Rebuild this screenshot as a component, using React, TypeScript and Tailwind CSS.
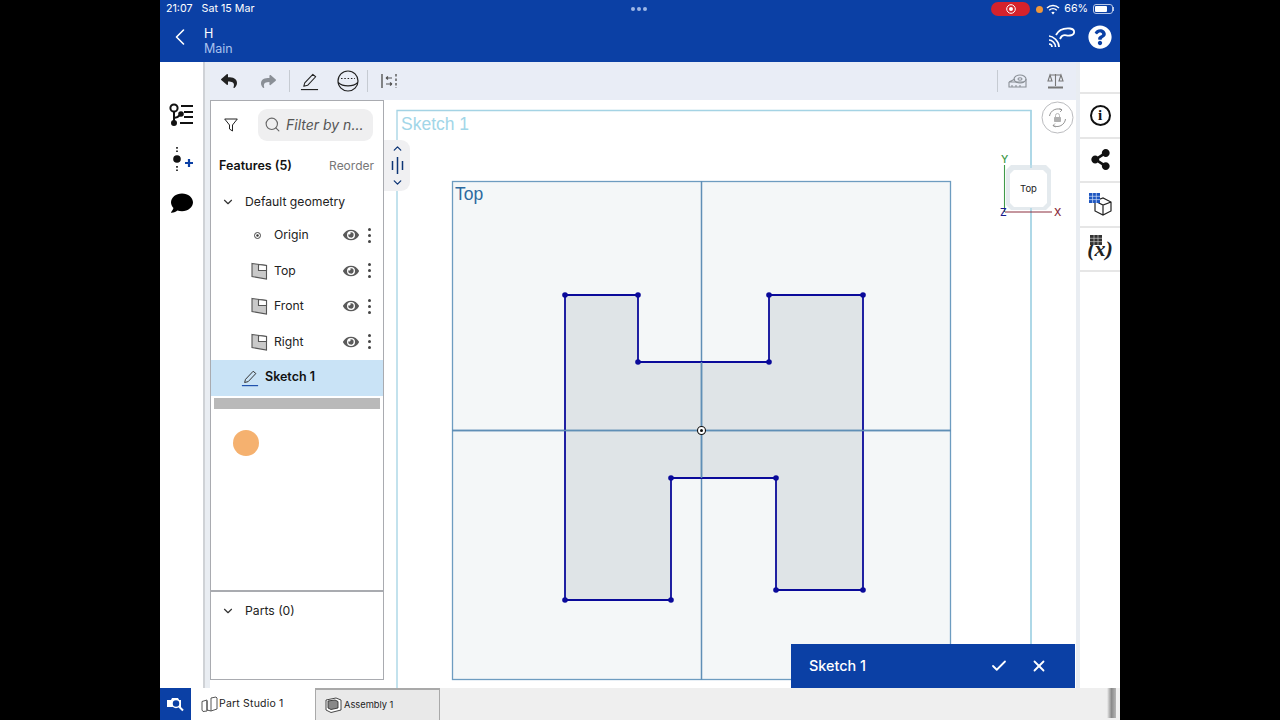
import { Check, ChevronDown, ChevronLeft, ChevronUp, Search, X } from 'lucide-react'
import { FaComment, FaEye, FaQuestionCircle, FaReply, FaShare, FaShareAlt } from 'react-icons/fa'

const PLANES = ['Top', 'Front', 'Right']

function PlaneIcon() {
  return (
    <svg width="18" height="18" viewBox="0 0 18 18" fill="none">
      <path d="M2 1.5 L16.5 3.5 V17 L2 14.5 Z" fill="#c9c9c9" stroke="#555" strokeWidth="1.1" />
      <path d="M8.5 2.5 V8.5 H16.5 V3.5 Z" fill="#fff" stroke="#555" strokeWidth="1.1" />
    </svg>
  )
}

function Pencil({ color = '#222', line = '#222', size = 20 }: { color?: string; line?: string; size?: number }) {
  return (
    <svg width={size} height={size} viewBox="0 0 20 20" fill="none">
      <path d="M4 15 L5 11.5 L13.5 2.5 L16.5 5 L8 14 Z" stroke={color} strokeWidth="1.1" strokeLinejoin="round" />
      <path d="M1 18.5 H19" stroke={line} strokeWidth="1.2" />
    </svg>
  )
}

function EyeMenu() {
  return (
    <div className="ml-auto flex items-center">
      <FaEye className="h-4 w-4 text-[#5a5a5a]" />
      <div className="ml-[9px] mr-[12px] flex flex-col gap-[3px]">
        <span className="h-[3px] w-[3px] rounded-full bg-[#444]" />
        <span className="h-[3px] w-[3px] rounded-full bg-[#444]" />
        <span className="h-[3px] w-[3px] rounded-full bg-[#444]" />
      </div>
    </div>
  )
}

function StatusBar() {
  return (
    <div className="relative flex h-[18px] items-center px-[6px] pt-[1px] text-[10.7px] text-white">
      <span>21:07</span>
      <span className="ml-[9px]">Sat 15 Mar</span>
      <div className="absolute left-[471px] top-[7px] flex gap-[2px]">
        <span className="h-1 w-1 rounded-full bg-[#9db6e6]" />
        <span className="h-1 w-1 rounded-full bg-[#9db6e6]" />
        <span className="h-1 w-1 rounded-full bg-[#9db6e6]" />
      </div>
      <div className="ml-auto flex items-center">
        <div className="flex h-[14px] w-[39px] items-center justify-center rounded-full bg-[#d5222c]">
          <svg width="10" height="10" viewBox="0 0 10 10">
            <circle cx="5" cy="5" r="4.3" fill="none" stroke="#fff" strokeWidth="1" />
            <circle cx="5" cy="5" r="2" fill="#fff" />
          </svg>
        </div>
        <span className="ml-[6px] h-[7px] w-[7px] rounded-full bg-[#f0973a]" />
        <svg className="ml-[3px]" width="14" height="11" viewBox="0 0 14 11" fill="none" stroke="#fff" strokeWidth="1.5">
          <path d="M1 4 C4.5 0.8 9.5 0.8 13 4" />
          <path d="M3.2 6.2 C5.3 4.4 8.7 4.4 10.8 6.2" />
          <path d="M7 10.5 L5.3 8.4 C6.3 7.6 7.7 7.6 8.7 8.4 Z" fill="#fff" stroke="none" />
        </svg>
        <span className="ml-[4px]">66%</span>
        <div className="ml-[5px] h-[10px] w-[20px] rounded-[3px] border border-[#b8c8e8] p-[1px]">
          <div className="h-full w-[12px] rounded-[1px] bg-white" />
        </div>
        <span className="h-[4px] w-[1px] bg-[#b8c8e8]" />
      </div>
    </div>
  )
}

function Header() {
  return (
    <div className="h-[62px] shrink-0 bg-[#0b40a5]">
      <StatusBar />
      <div className="flex h-[44px] items-center">
        <ChevronLeft className="mb-[6px] ml-[6px] h-[30px] w-[28px] text-white" strokeWidth={1.4} />
        <div className="ml-[10px] mt-[3px] leading-none">
          <div className="text-[12.5px] text-white">H</div>
          <div className="mt-[3px] text-[12.5px] text-[#a9c2ee]">Main</div>
        </div>
        <svg className="mb-[6px] ml-auto" width="28" height="22" viewBox="0 0 28 22" fill="none">
          <path d="M8 9 C11 3 16 2 22 2.5 C28 3.5 27 9 22 9.5 C18 10 17 8 14 10 C13 11 12.5 12 12 13" stroke="#fff" strokeWidth="1.8" />
          <path d="M1 10 C5 10 11 15 11 21 M1 14 C4 14 7.5 17 7.5 21 M1 18 C2.8 18 4 19.5 4 21" stroke="#fff" strokeWidth="1.7" />
        </svg>
        <FaQuestionCircle className="mb-[6px] ml-[12px] mr-[8px] h-[24px] w-[24px] text-white" />
      </div>
    </div>
  )
}

function LeftRail() {
  return (
    <div className="flex w-[43px] shrink-0 flex-col items-center bg-white pt-[41px]">
      <svg width="26" height="24" viewBox="0 0 26 24" fill="none" stroke="#111" strokeWidth="2">
        <circle cx="5" cy="5" r="3.6" />
        <path d="M5 9 V20 M5 15 C9 15 10 13 12 11" />
        <circle cx="5" cy="20" r="2" fill="#111" />
        <circle cx="12" cy="11" r="1.8" fill="#111" />
        <path d="M12 3 H24 M15 9 H24 M15 14 H24 M11 20 H24" />
      </svg>
      <svg className="mt-[20px]" width="22" height="24" viewBox="0 0 22 24">
        <path d="M6 0 V5 M6 19 V24" stroke="#111" strokeWidth="1.6" strokeDasharray="1.8 1.6" />
        <circle cx="6" cy="12" r="3.8" fill="#111" />
        <path d="M14 16 H22 M18 12 V20" stroke="#0b40a5" strokeWidth="2.2" />
      </svg>
      <FaComment className="mt-[21px] h-[22px] w-[24px] text-black" />
    </div>
  )
}

function Toolbar() {
  return (
    <div className="flex h-[38px] shrink-0 items-center bg-[#e9edf6]">
      <FaReply className="ml-[11px] h-[16px] w-[16px] text-[#222]" />
      <FaShare className="ml-[24px] h-[15px] w-[15px] text-[#8a8f96]" />
      <span className="ml-[13px] h-[22px] w-[1px] bg-[#c6cbd2]" />
      <div className="ml-[10px]">
        <Pencil size={19} />
      </div>
      <svg className="ml-[18px]" width="22" height="22" viewBox="0 0 22 22" fill="none" stroke="#222" strokeWidth="1.2">
        <circle cx="11" cy="11" r="10" />
        <path d="M1.2 12.5 C6 17 16 17 20.8 12.5" />
        <path d="M4 8.5 H18" strokeDasharray="1.5 1.8" />
      </svg>
      <span className="ml-[8px] h-[22px] w-[1px] bg-[#c6cbd2]" />
      <svg className="ml-[13px]" width="16" height="16" viewBox="0 0 16 16" fill="none" stroke="#555" strokeWidth="1.1">
        <path d="M1 1 V15" strokeWidth="1.4" />
        <path d="M15 1 V15" strokeDasharray="2.5 2" strokeWidth="1.4" />
        <path d="M5 5 H11 M5 5 L7 3.5 M5 5 L7 6.5 M11 11 H5 M11 11 L9 9.5 M11 11 L9 12.5" />
      </svg>
      <div className="ml-auto flex items-center">
        <span className="h-[22px] w-[1px] bg-[#c6cbd2]" />
        <svg className="ml-[10px]" width="19" height="15" viewBox="0 0 19 15" fill="none" stroke="#8a8f96" strokeWidth="1.1">
          <ellipse cx="12" cy="5" rx="6" ry="4" />
          <ellipse cx="12" cy="5" rx="2" ry="1.2" />
          <path d="M1 8 L7 5 M1 8 V13 H18 V5 M1 8 H16 M4 13 V11 M8 13 V11 M12 13 V11" />
        </svg>
        <svg className="ml-[20px] mr-[12px]" width="17" height="16" viewBox="0 0 17 16" fill="none" stroke="#777" strokeWidth="1.1">
          <path d="M8.5 1 V13 M3 2 H14 M3 2 L1 8 H5 Z M14 2 L12 8 H16 Z" />
          <path d="M1 14.5 H16" strokeWidth="2" />
        </svg>
      </div>
    </div>
  )
}

function FeaturePanel() {
  return (
    <div className="flex h-[580px] w-[174px] flex-col border border-[#a9abb0] bg-white">
      <div className="flex h-[47px] shrink-0 items-center">
        <svg className="ml-[13px]" width="14" height="14" viewBox="0 0 14 14" fill="none" stroke="#222" strokeWidth="1">
          <path d="M0.7 1 H13.3 L8.5 7 V13 L5.5 11 V7 Z" strokeLinejoin="round" />
        </svg>
        <div className="ml-[20px] flex h-[32px] w-[115px] items-center rounded-[9px] bg-[#efeff0] pl-[6px]">
          <Search className="h-[17px] w-[17px] text-[#666]" strokeWidth={1.6} />
          <span className="ml-[5px] text-[14px] italic text-[#555]">Filter by n...</span>
        </div>
      </div>
      <div className="flex h-[36px] shrink-0 items-center justify-between pl-[8px] pr-[9px]">
        <span className="text-[12.5px] font-semibold text-[#111]">Features (5)</span>
        <span className="text-[12px] text-[#777]">Reorder</span>
      </div>
      <div className="flex h-[36px] shrink-0 items-center pl-[10px]">
        <ChevronDown className="h-[14px] w-[14px] text-[#333]" strokeWidth={2} />
        <span className="ml-[10px] text-[12.2px] text-[#222]">Default geometry</span>
      </div>
      <div className="flex h-[33px] shrink-0 items-center pb-[3px] pl-[43px]">
        <svg width="7" height="7" viewBox="0 0 7 7" fill="none">
          <circle cx="3.5" cy="3.5" r="3" stroke="#333" strokeWidth="0.9" />
          <circle cx="3.5" cy="3.5" r="1.2" fill="#333" />
        </svg>
        <span className="ml-[13px] text-[12.2px] text-[#222]">Origin</span>
        <EyeMenu />
      </div>
      {PLANES.map((name) => (
        <div key={name} className="flex h-[35.5px] shrink-0 items-center pl-[39px]">
          <PlaneIcon />
          <span className="ml-[6px] text-[12.2px] text-[#222]">{name}</span>
          <EyeMenu />
        </div>
      ))}
      <div className="flex h-[36px] shrink-0 items-center bg-[#c9e3f6] pl-[30px]">
        <Pencil color="#333" line="#0b40a5" size={18} />
        <span className="ml-[6px] text-[12.5px] font-semibold text-[#111]">Sketch 1</span>
      </div>
      <div className="mx-[3px] mt-[2px] h-[11px] shrink-0 bg-[#b9b9b9]" />
      <div className="min-h-0 flex-1" />
      <div className="h-[89px] shrink-0 border-t-2 border-[#a9abb0]">
        <div className="mt-[10px] flex items-center pl-[10px]">
          <ChevronDown className="h-[14px] w-[14px] text-[#333]" strokeWidth={2} />
          <span className="ml-[10px] text-[12.2px] text-[#222]">Parts (0)</span>
        </div>
      </div>
    </div>
  )
}

function SketchDrawing() {
  return (
    <svg className="absolute inset-0 h-full w-full" viewBox="384 100 692 588" fill="none">
      <path d="M397 688 V110.500 H1031 V688" stroke="#a4d3e4" strokeWidth="1.300" />
      <rect x="452.500" y="181.500" width="498" height="498" fill="#f4f7f8" stroke="#6d9cc0" strokeWidth="1.300" />
      <path d="M452 430.500 H951 M701.500 181 V680" stroke="#5f8fb6" strokeWidth="1.500" />
      <path
        d="M565 295 H638 V362 H769 V295 H863 V590 H776 V478 H671 V600 H565 Z"
        fill="#8a9aa3"
        fillOpacity="0.2"
        stroke="#0a0a9a"
        strokeWidth="1.800"
      />
      <path d="M452 430.500 H951 M701.500 362 V478" stroke="#5f8fb6" strokeWidth="1.500" />
      {[
        [565, 295],
        [638, 295],
        [638, 362],
        [769, 362],
        [769, 295],
        [863, 295],
        [863, 590],
        [776, 590],
        [776, 478],
        [671, 478],
        [671, 600],
        [565, 600],
      ].map(([x, y]) => (
        <circle key={`${x}-${y}`} cx={x} cy={y} r="2.800" fill="#0a0a9a" />
      ))}
      <circle cx="701.500" cy="430.500" r="4" fill="#fff" stroke="#111" strokeWidth="1.100" />
      <circle cx="701.500" cy="430.500" r="1.500" fill="#111" />
      <path d="M1011 165 H1046 L1051 170 V205 L1046 210 H1011 L1006 205 V170 Z" fill="#e4eaee" />
      <path d="M1014 170 H1043 L1047 174 V203 L1043 207 H1014 L1010 203 V174 Z" fill="#fff" />
      <path d="M1031 110 V168 M1031 208 V688" stroke="#a4d3e4" strokeWidth="1.300" />
      <path d="M1004.500 165 V212" stroke="#3f9a4a" strokeWidth="1.100" />
      <path d="M1005 212 H1052" stroke="#8c2f3f" strokeWidth="1.100" />
      <circle cx="1057.500" cy="117.500" r="15.500" fill="#fff" stroke="#a8aaad" strokeWidth="0.800" />
      <path d="M1049.500 116 A8.500 8.500 0 0 1 1062 110 M1065.500 119 A8.500 8.500 0 0 1 1053 125.500" stroke="#888" strokeWidth="0.900" />
      <path d="M1062 110 L1059.500 108.500 M1062 110 L1060 112 M1053 125.500 L1055.500 127 M1053 125.500 L1055 123.500" stroke="#888" strokeWidth="0.800" />
      <rect x="1054" y="117" width="7" height="5" rx="0.800" fill="#b0b0b0" />
      <path d="M1055.500 117 V115.500 A2 2 0 0 1 1059.500 115.500 V117" stroke="#b0b0b0" strokeWidth="0.900" />
    </svg>
  )
}

function Canvas() {
  return (
    <div className="relative min-w-0 flex-1 bg-white">
      <SketchDrawing />
      <span className="absolute left-[17px] top-[14px] font-['Liberation_Sans',sans-serif] text-[17.5px] leading-[21px] text-[#a2d6e8]">
        Sketch 1
      </span>
      <span className="absolute left-[71px] top-[84px] font-['Liberation_Sans',sans-serif] text-[17.5px] leading-[21px] text-[#2d6a9f]">
        Top
      </span>
      <span className="absolute left-[636px] top-[83px] text-[9.5px] leading-[12px] text-[#222]">Top</span>
      <span className="absolute left-[617px] top-[54px] text-[10.5px] font-medium leading-[12px] text-[#3f9a4a]">Y</span>
      <span className="absolute left-[616px] top-[107px] text-[10.5px] font-medium leading-[12px] text-[#1b1b8c]">Z</span>
      <span className="absolute left-[670px] top-[107px] text-[10.5px] font-medium leading-[12px] text-[#8c2f3f]">X</span>

      <div className="absolute left-0 top-[40px] flex h-[51px] w-[26px] flex-col items-center justify-between rounded-r-[9px] bg-[#f0f0f2] py-[2px]">
        <ChevronUp className="h-[13px] w-[13px] text-[#0d3576]" strokeWidth={2.400} />
        <svg width="13" height="17" viewBox="0 0 13 17" stroke="#0d3576" strokeWidth="1.500">
          <path d="M1.500 4 V13 M6.500 0 V17 M11.500 4 V13" />
        </svg>
        <ChevronDown className="h-[13px] w-[13px] text-[#0d3576]" strokeWidth={2.400} />
      </div>

      <div className="absolute bottom-0 left-[407px] flex h-[44px] w-[284px] items-center bg-[#0b40a5] pl-[18px] text-white">
        <span className="text-[14.4px] font-medium">Sketch 1</span>
        <Check className="ml-auto h-[18px] w-[18px]" strokeWidth={2.400} />
        <X className="ml-[22px] mr-[27px] h-[18px] w-[18px]" strokeWidth={2.400} />
      </div>
    </div>
  )
}

function RailButton({ children }: { children: React.ReactNode }) {
  return <div className="flex h-[44.500px] items-center justify-center border-b-2 border-[#e6e6e6]">{children}</div>
}

function RightRail() {
  return (
    <div className="flex w-[40px] shrink-0 flex-col bg-white pt-[30px]">
      <div className="border-t-2 border-[#e6e6e6]">
        <RailButton>
          <div className="flex h-[21px] w-[21px] items-center justify-center rounded-full border-2 border-[#111] font-['Liberation_Serif',serif] text-[15px] font-bold leading-none text-[#111]">
            i
          </div>
        </RailButton>
        <RailButton>
          <FaShareAlt className="h-[21px] w-[21px] text-[#111]" />
        </RailButton>
        <RailButton>
          <svg width="24" height="24" viewBox="0 0 24 24" fill="none">
            <path d="M7 9 L15 6 L23 10 V19 L15 23 L7 19 Z M7 9 L15 13 L23 10 M15 13 V23" stroke="#222" strokeWidth="1.200" />
            <rect x="1" y="1" width="11" height="10" fill="#1d55c0" />
            <path d="M1 4.300 H12 M1 7.600 H12 M4.600 1 V11 M8.300 1 V11" stroke="#cfe0f8" strokeWidth="0.700" />
          </svg>
        </RailButton>
        <div className="relative flex h-[44.500px] items-center justify-center border-b-2 border-[#e6e6e6]">
          <span className="font-['Liberation_Serif',serif] text-[22px] font-bold italic leading-none text-[#222]">(x)</span>
          <svg className="absolute left-[10px] top-[7px]" width="12" height="10" viewBox="0 0 12 10">
            <rect width="12" height="10" fill="#333" />
            <path d="M0 3.300 H12 M0 6.600 H12 M4 0 V10 M8 0 V10" stroke="#ddd" strokeWidth="0.600" />
          </svg>
        </div>
      </div>
    </div>
  )
}

function TabBar() {
  return (
    <div className="relative flex h-[32px] shrink-0 bg-[#efefef]">
      <div className="flex w-[31px] items-center justify-center bg-[#0b40a5]">
        <svg width="20" height="16" viewBox="0 0 20 16" fill="none">
          <path d="M1 4 H5 L6 2 H12 L13 4 H15 V11 H1 Z" fill="#fff" />
          <circle cx="10" cy="7.500" r="4" fill="#0b40a5" stroke="#fff" strokeWidth="1.500" />
          <path d="M13 10.500 L17 14.500" stroke="#fff" strokeWidth="2" />
        </svg>
      </div>
      <div className="flex w-[124px] items-center bg-white pl-[10px]">
        <svg width="17" height="16" viewBox="0 0 17 16" fill="none" stroke="#444" strokeWidth="0.900">
          <path d="M1 5.500 L6 4 V15 L2 15.500 L1 14 Z M6 5 V14 L10 15 V2 L15 1 L16 2 V13 L10 15" />
        </svg>
        <span className="ml-[1px] text-[10.5px] tracking-[0.2px] text-[#222]">Part Studio 1</span>
      </div>
      <div className="flex w-[125px] items-center border-t-2 border-x border-[#a9a9a9] bg-[#e9e9e9] pl-[9px]">
        <svg width="17" height="16" viewBox="0 0 17 16" fill="none" stroke="#333" strokeWidth="0.900">
          <path d="M1 3 L11 1 L16 3 V13 L6 15.500 L1 13 Z" fill="#fff" />
          <path d="M3 4 L10 3 L13 4.500 V11 L6 12.500 L3 11 Z" fill="#888" />
        </svg>
        <span className="ml-[2px] text-[9.3px] text-[#222]">Assembly 1</span>
      </div>
      <div className="absolute bottom-[2px] right-[4px] top-0 w-[9px] bg-gradient-to-r from-[#efefef] via-[#8a8a8a] to-[#b5b5b5]" />
    </div>
  )
}

export default function App() {
  return (
    <div className="flex h-[720px] w-[1280px] justify-center overflow-hidden bg-black font-['Inter',sans-serif]">
      <div className="relative flex w-[960px] flex-col bg-white">
        <Header />
        <div className="flex min-h-0 flex-1">
          <LeftRail />
          <div className="w-[7px] shrink-0 border-l-2 border-[#cfd2d6] bg-[#e9edf2]" />
          <div className="flex min-w-0 flex-1 flex-col">
            <Toolbar />
            <div className="flex min-h-0 flex-1">
              <FeaturePanel />
              <Canvas />
            </div>
          </div>
          <div className="w-[4px] shrink-0 bg-[#e9edf2]" />
          <RightRail />
        </div>
        <TabBar />
        <div className="absolute left-[73px] top-[430px] h-[26px] w-[26px] rounded-full bg-[#f5b16f]" />
      </div>
    </div>
  )
}
